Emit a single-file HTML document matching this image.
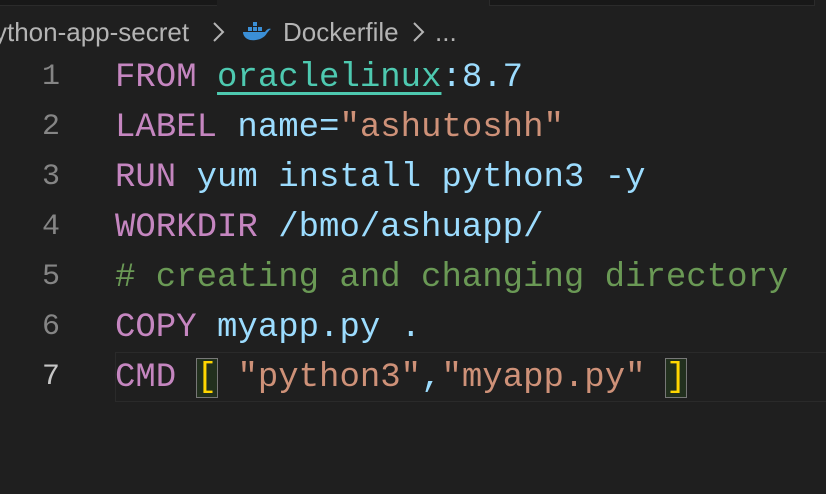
<!DOCTYPE html>
<html><head><meta charset="utf-8"><style>
html,body{margin:0;padding:0;background:#1f1f1f;width:826px;height:494px;overflow:hidden;position:relative}
.tab1{position:absolute;left:0;top:0;width:217px;height:5px;background:#181818;border-bottom:1px solid #2b2b2b}
.tab2{position:absolute;left:489px;top:0;width:324px;height:5px;background:#181818;border:1px solid #2b2b2b;border-top:none}
.bc{position:absolute;top:16px;font:26px "Liberation Sans",sans-serif;color:#b4b4b4;white-space:nowrap;line-height:32px}
.ln{position:absolute;left:0;width:60px;text-align:right;font:30px "Liberation Mono",monospace;color:#858585;line-height:50px}
.code{position:absolute;left:115px;font:34px "Liberation Mono",monospace;color:#9cdcfe;white-space:pre;line-height:50px}
.k{color:#c586c0}.s{color:#ce9178}.c{color:#6a9955}.t{color:#4ec9b0;text-decoration:underline;text-decoration-color:#4ec9b0;text-underline-offset:6px}
.hl{position:absolute;left:115px;top:352px;right:-2px;height:48px;border:1px solid #2a2a2a}
.br{color:#ffd700;outline:1px solid #777;background:#22301e}
</style></head><body>
<div class="tab1"></div><div class="tab2"></div>
<div class="bc" style="left:-6px">ython-app-secret</div>
<svg style="position:absolute;left:212px;top:21px" width="14" height="22" viewBox="0 0 14 22"><path d="M2 2 L11 11 L2 20" fill="none" stroke="#b4b4b4" stroke-width="2"/></svg>
<svg style="position:absolute;left:242px;top:22px" width="30" height="20" viewBox="0 0 30 20"><path d="M1 10 H23 C25 7 27 6 29 7 C27 8 26 10 25 11 C22 17 14 19 8 18 C4 17 1 14 1 10Z" fill="#3b8fd6"/><rect x="6" y="5" width="4" height="4" fill="#3b8fd6"/><rect x="11" y="5" width="4" height="4" fill="#3b8fd6"/><rect x="11" y="0" width="4" height="4" fill="#3b8fd6"/><rect x="16" y="5" width="4" height="4" fill="#3b8fd6"/></svg>
<div class="bc" style="left:283px">Dockerfile</div>
<svg style="position:absolute;left:412px;top:21px" width="14" height="22" viewBox="0 0 14 22"><path d="M2 2 L11 11 L2 20" fill="none" stroke="#b4b4b4" stroke-width="2"/></svg>
<div class="bc" style="left:435px">...</div>
<div class="hl"></div>
<div class="ln" style="top:52px">1</div>
<div class="ln" style="top:102px">2</div>
<div class="ln" style="top:152px">3</div>
<div class="ln" style="top:202px">4</div>
<div class="ln" style="top:252px">5</div>
<div class="ln" style="top:302px">6</div>
<div class="ln" style="top:352px;color:#c6c6c6">7</div>
<div class="code" style="top:53px"><span class="k">FROM</span> <span class="t">oraclelinux</span>:8.7</div>
<div class="code" style="top:103px"><span class="k">LABEL</span> name=<span class="s">"ashutoshh"</span></div>
<div class="code" style="top:153px"><span class="k">RUN</span> yum install python3 -y</div>
<div class="code" style="top:203px"><span class="k">WORKDIR</span> /bmo/ashuapp/</div>
<div class="code" style="top:253px"><span class="c"># creating and changing directory</span></div>
<div class="code" style="top:303px"><span class="k">COPY</span> myapp.py .</div>
<div class="code" style="top:353px"><span class="k">CMD</span> <span class="br">[</span> <span class="s">"python3"</span>,<span class="s">"myapp.py"</span> <span class="br">]</span></div>
</body></html>
